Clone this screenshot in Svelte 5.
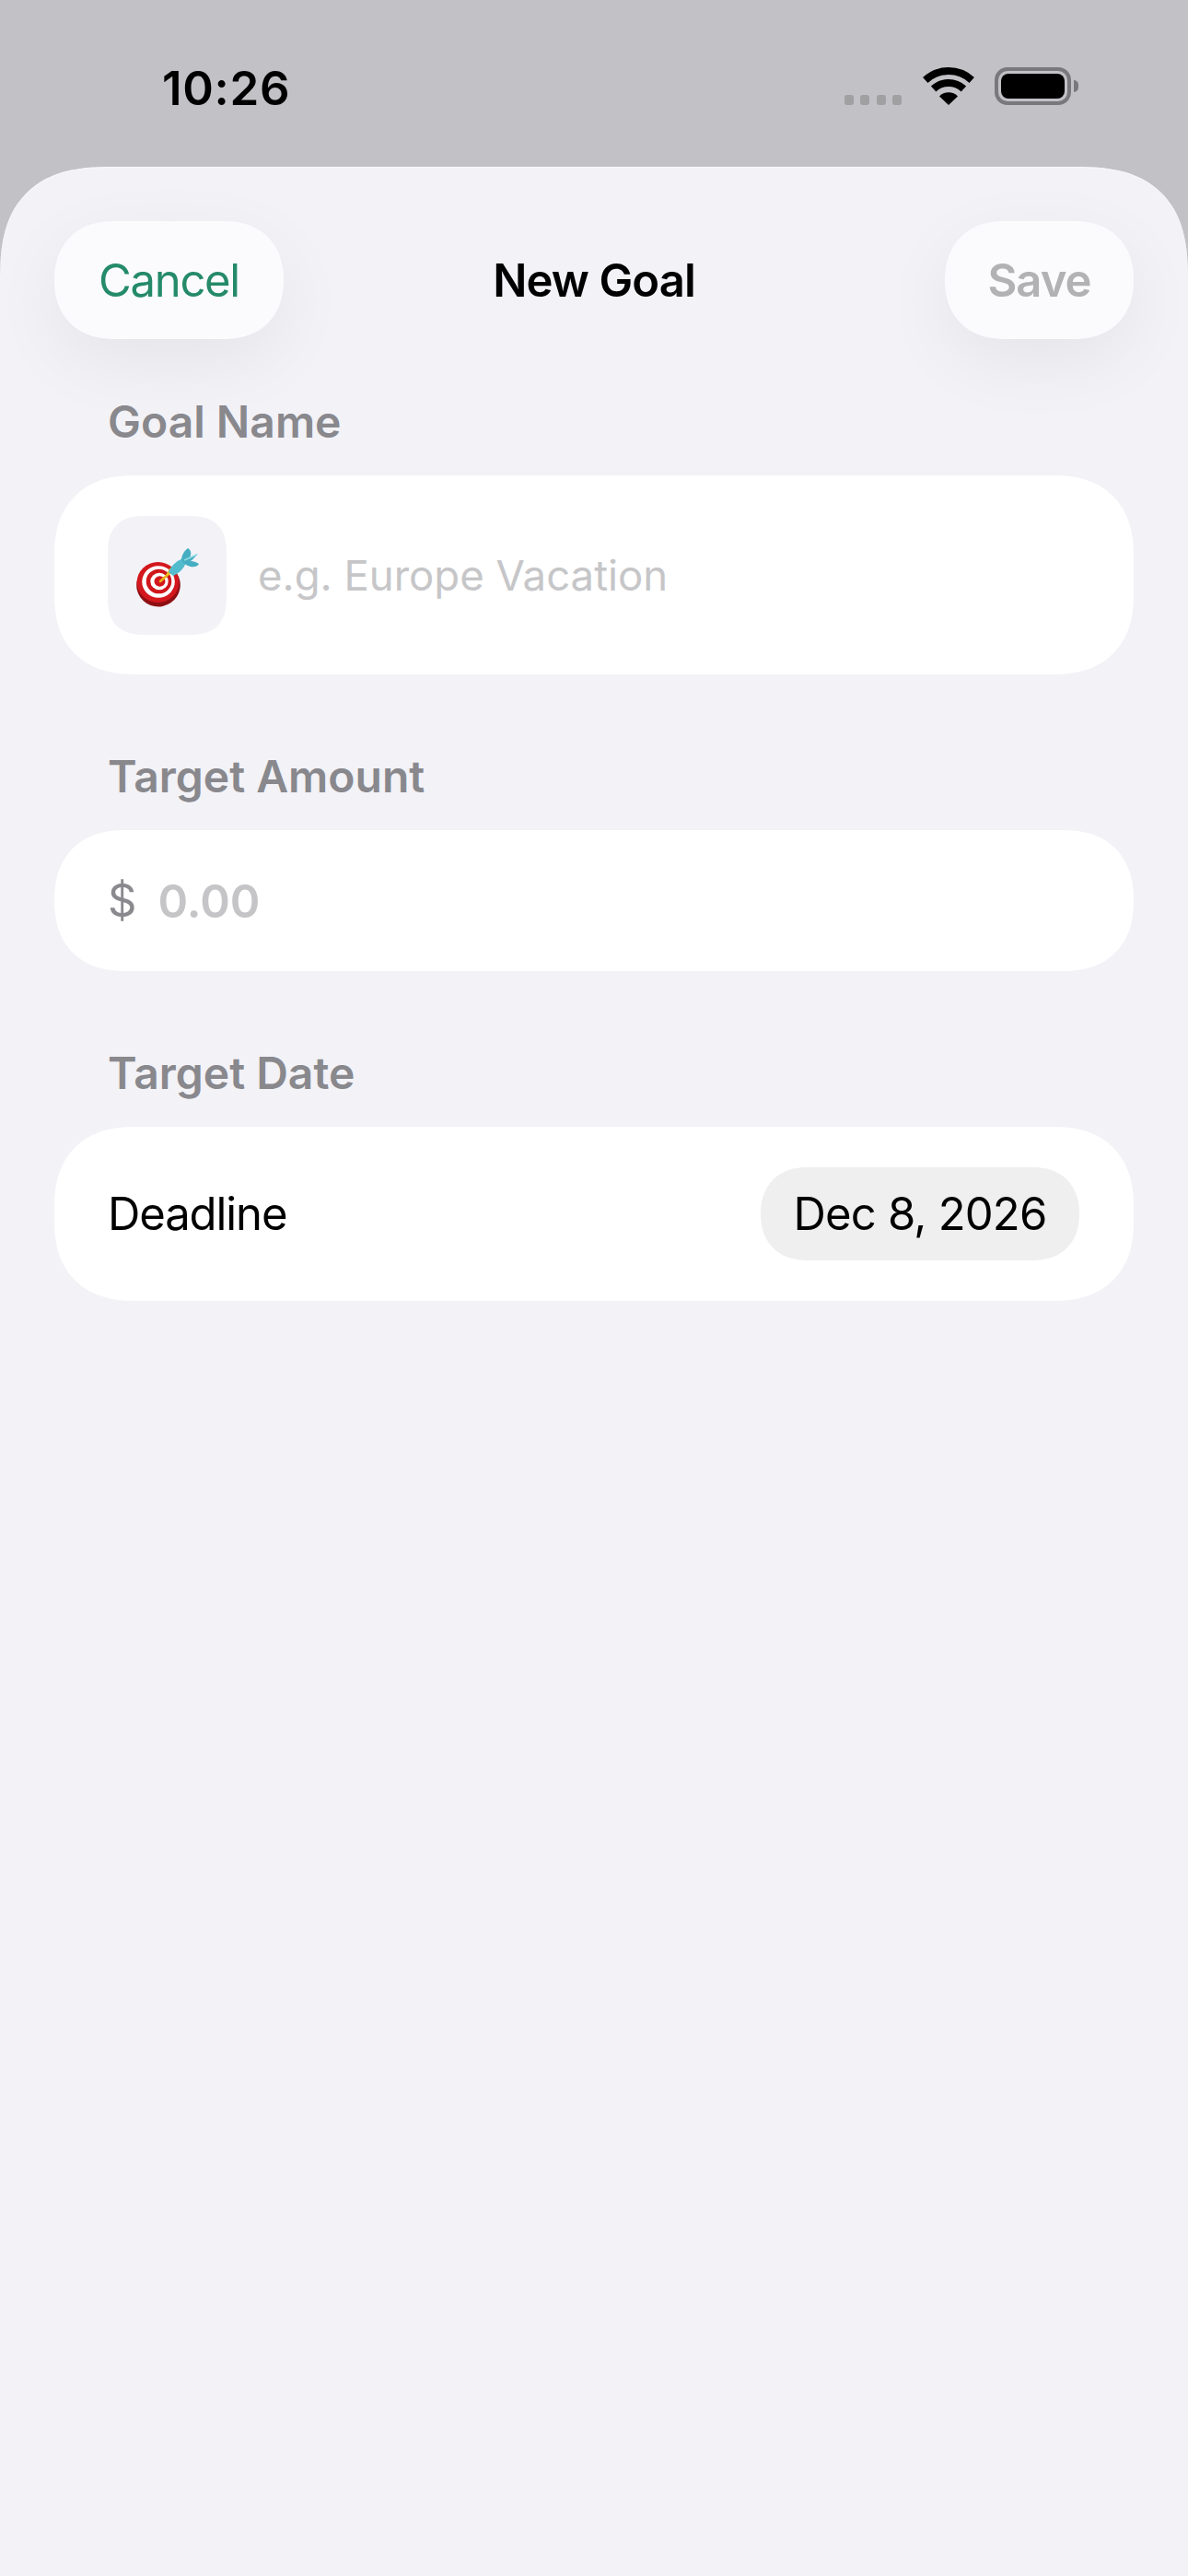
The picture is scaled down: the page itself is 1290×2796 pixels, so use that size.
<script>
    let goalName = "e.g. Europe Vacation";
    let amount = "0.00";
    let deadline = "Dec 8, 2026";
</script>

<div class="screen">
    <div class="status">
        <span class="time">10:26</span>
        <div class="status-icons">
            <div class="signal">
                <i></i><i></i><i></i><i></i>
            </div>
            <svg class="wifi" width="56" height="41" viewBox="0 0 56 41" fill="none">
                <path d="M2.8 14 A37 37 0 0 1 53.2 14" stroke="#000" stroke-width="8" />
                <path d="M11.6 23.5 A24 24 0 0 1 44.4 23.5" stroke="#000" stroke-width="8" />
                <path d="M28 41 L18 31.5 A14 14 0 0 1 38 31.5 Z" fill="#000" />
            </svg>
            <div class="battery"><div class="level"></div></div>
            <div class="battery-cap"></div>
        </div>
    </div>

    <div class="sheet">
        <div class="header">
            <div class="side">
                <button class="pill cancel">Cancel</button>
            </div>
            <span class="title">New Goal</span>
            <div class="side right">
                <button class="pill save">Save</button>
            </div>
        </div>

        <div class="label first">Goal Name</div>
        <div class="card name-card">
            <div class="emoji-box">
                <svg width="68" height="68" viewBox="0 0 68 68">
                    <!-- board edge -->
                    <ellipse cx="24" cy="41" rx="23.8" ry="23.4" fill="#8e0f12" transform="rotate(-12 24 41)" />
                    <ellipse cx="23.5" cy="38" rx="22.8" ry="22" fill="#d3181d" />
                    <ellipse cx="24" cy="37.5" rx="17.8" ry="17.2" fill="#fff" />
                    <ellipse cx="24.5" cy="37" rx="13.8" ry="13.3" fill="#cf161b" />
                    <ellipse cx="25" cy="37" rx="9.7" ry="9.3" fill="#fff" />
                    <ellipse cx="25.5" cy="37" rx="6" ry="5.7" fill="#d3181d" />
                    <!-- dart -->
                    <path d="M26 37 L35 29" stroke="#e9b416" stroke-width="2.6" stroke-linecap="round" />
                    <path d="M32 30 L37 22 L44 28 Z" fill="#eec21e" />
                    <path d="M35 27 C38 19 46 13 52 12 C56 17 51 26 40 31 Z" fill="#52bccd" />
                    <path d="M49 14 C49 9 52 4 56 1 C60 3 60 8 58 11 C61 10 64 8 67 7 C65 9 62 13 59 15 C62 15 65 16 68 18 C66 22 60 22 56 20 C53 19 51 17 49 14 Z" fill="#46aec2" />
                    <path d="M52 14 L66 8" stroke="#8fdbe4" stroke-width="1.5" />
                </svg>
            </div>
            <span class="placeholder">{goalName}</span>
        </div>

        <div class="label">Target Amount</div>
        <div class="card amount-card">
            <span class="dollar">$</span>
            <span class="amount">{amount}</span>
        </div>

        <div class="label">Target Date</div>
        <div class="card date-card">
            <span class="deadline">Deadline</span>
            <span class="date-pill">{deadline}</span>
        </div>
    </div>
</div>

<style>
    :global(body) {
        margin: 0;
        background: #f2f2f7;
    }
    .screen {
        width: 1290px;
        height: 2796px;
        background: #c2c1c6;
        font-family: Inter, "Liberation Sans", sans-serif;
        display: flex;
        flex-direction: column;
        overflow: hidden;
        color: #000;
    }
    .status {
        height: 181px;
        flex: none;
        display: flex;
        justify-content: space-between;
        padding: 66px 119px 0 176px;
        box-sizing: border-box;
    }
    .time {
        font-size: 51px;
        font-weight: 600;
        line-height: 60px;
        letter-spacing: 0.7px;
    }
    .status-icons {
        display: flex;
        align-items: flex-start;
        padding-top: 7px;
    }
    .signal {
        display: flex;
        gap: 7.5px;
        margin-top: 30px;
        margin-right: 23px;
    }
    .signal i {
        width: 10px;
        height: 11px;
        border-radius: 3px;
        background: #a0a0a3;
    }
    .battery {
        width: 83px;
        height: 41px;
        margin-left: 22px;
        box-sizing: border-box;
        border: 4px solid #79797c;
        border-radius: 14px;
        padding: 3px;
    }
    .level {
        height: 100%;
        background: #000;
        border-radius: 8px;
    }
    .battery-cap {
        width: 5px;
        height: 13px;
        margin: 14px 0 0 3px;
        background: #79797c;
        border-radius: 0 5px 5px 0;
    }
    .sheet {
        flex: 1;
        background: #f2f2f7;
        border-radius: 124px 124px 0 0;
        corner-shape: superellipse(1.4);
        padding: 59px 59px 0;
        box-shadow: inset 0 1px 0 #f9f9fc;
    }
    .header {
        display: grid;
        grid-template-columns: 1fr auto 1fr;
        align-items: center;
    }
    .side {
        display: flex;
    }
    .side.right {
        justify-content: flex-end;
    }
    .pill {
        height: 128px;
        padding: 0;
        border: none;
        border-radius: 64px;
        corner-shape: superellipse(1.15);
        background: #fbfbfe;
        font-family: inherit;
        font-size: 49px;
        box-shadow: 0 24px 80px rgba(0, 0, 0, 0.06);
    }
    .cancel {
        width: 249px;
        color: #258a68;
        letter-spacing: -1.3px;
    }
    .save {
        width: 205px;
        color: #b2b2b4;
        font-weight: 600;
        letter-spacing: -1px;
    }
    .title {
        font-size: 49px;
        font-weight: 600;
        letter-spacing: -0.9px;
    }
    .label {
        font-size: 48px;
        font-weight: 600;
        line-height: 58px;
        color: #88888d;
        margin: 82px 0 29px 58px;
    }
    .label.first {
        margin-top: 61px;
    }
    .card {
        background: #fff;
        border-radius: 86px;
        corner-shape: superellipse(1.2);
        display: flex;
        align-items: center;
        padding: 0 58px;
    }
    .name-card {
        height: 216px;
        gap: 34px;
    }
    .emoji-box {
        width: 129px;
        height: 129px;
        border-radius: 42px;
        corner-shape: superellipse(1.4);
        background: #f2f2f7;
        display: flex;
        align-items: center;
        justify-content: center;
        padding-top: 8px;
        box-sizing: border-box;
    }
    .placeholder {
        font-size: 45.5px;
        color: #c6c6c8;
    }
    .amount-card {
        height: 153px;
        gap: 23px;
    }
    .dollar {
        font-size: 49px;
        color: #8a8a8e;
    }
    .amount {
        font-size: 49.5px;
        font-weight: 600;
        color: #c5c5c7;
    }
    .date-card {
        height: 189px;
        justify-content: space-between;
    }
    .deadline {
        font-size: 49px;
        letter-spacing: -1.1px;
    }
    .date-pill {
        font-size: 49px;
        letter-spacing: -0.8px;
        background: #efeff0;
        border-radius: 50px;
        corner-shape: superellipse(1.15);
        height: 101px;
        width: 346px;
        margin-right: 1px;
        display: flex;
        align-items: center;
        justify-content: center;
    }
</style>
